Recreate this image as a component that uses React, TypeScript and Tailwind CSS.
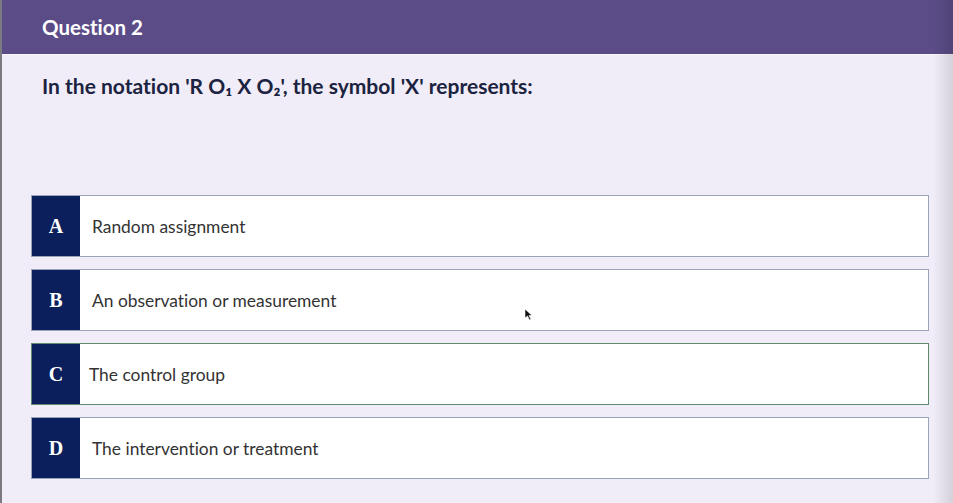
const options = [
  { key: 'A', text: 'Random assignment', pad: 'pl-[12px]', border: 'border-[#9aa3b8]' },
  { key: 'B', text: 'An observation or measurement', pad: 'pl-[12px]', border: 'border-[#9aa3b8]' },
  { key: 'C', text: 'The control group', pad: 'pl-[9px]', border: 'border-[#5f8a70]' },
  { key: 'D', text: 'The intervention or treatment', pad: 'pl-[12px]', border: 'border-[#9aa3b8]' },
];

export default function App() {
  return (
    <div className="relative h-[503px] w-[953px] overflow-hidden border-l-2 border-[#7a7a80] bg-[#f0edf8] font-['Lato',sans-serif] [font-variant-ligatures:none]">
      <header className="flex h-[55px] items-center border-b border-[#f8f6fc] bg-[#5b4c88] pl-[40px]">
        <h1 className="mt-[1px] text-[20.5px] font-bold text-white">Question 2</h1>
      </header>

      <div className="pl-[40px] pt-[15px]">
        <p className="text-[21px] font-bold text-[#1c2340]">
          In the notation 'R O₁ X O₂', the symbol 'X' represents:
        </p>
      </div>

      <div className="mt-[93px] flex flex-col gap-[12px] pl-[29px] pr-[24px]">
        {options.map((o) => (
          <div key={o.key} className={`flex h-[62px] border bg-white ${o.border}`}>
            <div className="flex w-[48px] items-center justify-center bg-[#0b1f5c] font-['Liberation_Serif',serif] text-[20px] font-bold text-white">
              {o.key}
            </div>
            <div className={`flex items-center pt-[3px] text-[17.4px] text-[#333333] ${o.pad}`}>{o.text}</div>
          </div>
        ))}
      </div>

      {/* mouse pointer */}
      <svg className="absolute left-[522px] top-[308px]" width="9" height="13" viewBox="0 0 9 13">
        <path d="M1 1 L1 10 L3.5 8 L5.5 12 L7 11.3 L5 7.5 L8 7.5 Z" fill="#111" stroke="#fff" strokeWidth="0.6" />
      </svg>

      {/* soft shade along the right edge */}
      <div className="pointer-events-none absolute right-0 top-0 h-full w-[20px] bg-gradient-to-r from-transparent to-black/12" />
    </div>
  );
}
